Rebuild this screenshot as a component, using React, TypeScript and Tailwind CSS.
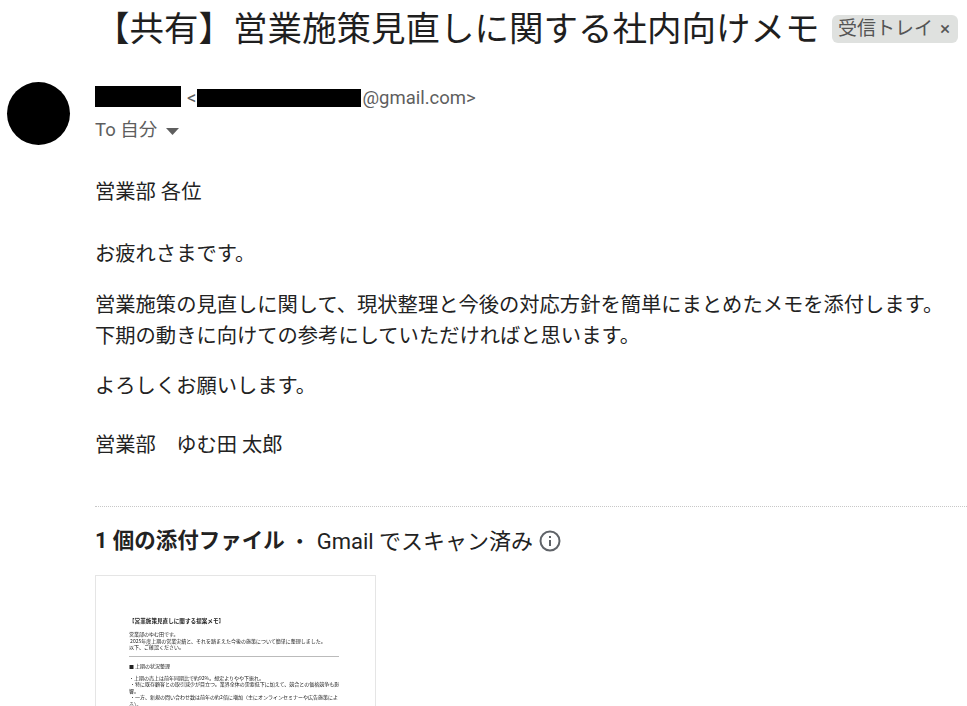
import React from "react";

const ff = { fontFamily: '"Roboto","Noto Sans CJK JP",sans-serif' };

function Thumb() {
  return (
    <div className="mt-[18px] w-[281px] h-[140px] border border-[#e5e5e5] overflow-hidden bg-white pl-[33px] pr-[36px] pt-[41px] text-[#222]" style={{ fontFamily: '"Noto Sans CJK JP",sans-serif' }}>
      <div className="blur-[0.4px]">
        <div className="text-[5.6px] leading-[9px] font-bold whitespace-nowrap">【営業施策見直しに関する提案メモ】</div>
        <div className="mt-[5px] text-[5px] leading-[6.5px] whitespace-nowrap">
          <div>営業部のゆむ田です。</div>
          <div>&nbsp;2025年度上期の営業実績と、それを踏まえた今後の施策について簡単に整理しました。</div>
          <div>以下、ご確認ください。</div>
        </div>
        <div className="mt-[5px] h-px bg-[#bbb]" />
        <div className="mt-[5px] text-[5px] leading-[8px] whitespace-nowrap">■ 上期の状況整理</div>
        <div className="mt-[5px] text-[5px] leading-[6.5px]">
          <div className="whitespace-nowrap">・上期の売上は前年同期比で約92%。想定よりやや下振れ。</div>
          <div className="whitespace-nowrap">&nbsp;・特に既存顧客との取引減少が目立つ。業界全体の需要低下に加えて、競合との価格競争も影</div>
          <div>響。</div>
          <div className="whitespace-nowrap">&nbsp;・一方、新規の問い合わせ数は前年の約2倍に増加（主にオンラインセミナーや広告施策によ</div>
          <div>る）。</div>
        </div>
      </div>
    </div>
  );
}

export default function App() {
  return (
    <div className="w-[967px] h-[706px] overflow-hidden bg-white" style={ff}>
      <div className="flex items-center h-[60px] pl-[95px]">
        <h1 className="text-[34.5px] leading-[40px] font-normal text-[#1f1f1f] whitespace-nowrap -mt-[2px]">【共有】営業施策見直しに関する社内向けメモ</h1>
        <div className="ml-[12.5px] h-[28px] w-[126px] -mt-[2px] rounded-[6px] bg-[#dfe1df] flex items-center pl-[6px] text-[#555] text-[19px] whitespace-nowrap">
          受信トレイ
          <span className="ml-[7px] text-[19px]">×</span>
        </div>
      </div>
      <div className="flex pl-[7px] mt-[22px]">
        <div className="w-[63px] h-[63px] rounded-full bg-black shrink-0" />
        <div className="ml-[25px] flex-1">
          <div className="flex items-end h-[25px]">
            <div className="w-[86px] h-[21px] bg-black" />
            <span className="ml-[6px] -mb-[2px] text-[18.5px] leading-[21px] text-[#5e5e5e]">&lt;</span>
            <div className="ml-[1px] w-[164px] h-[18px] bg-black" />
            <span className="ml-[1px] -mb-[2px] text-[18.5px] leading-[21px] text-[#5e5e5e]">@gmail.com&gt;</span>
          </div>
          <div className="flex items-center mt-[12px] h-[24px] text-[18.5px] text-[#5e5e5e]">
            To 自分
            <svg className="ml-[9px]" width="13" height="7" viewBox="0 0 13 7"><path d="M0 0h13L6.5 7z" fill="#5e5e5e" /></svg>
          </div>
        </div>
      </div>
      <div className="ml-[95px] mt-[32px] text-[20.3px] text-[#222] leading-[31px]">
        <p>営業部 各位</p>
        <p className="mt-[31px]">お疲れさまです。</p>
        <p className="mt-[20px] whitespace-nowrap">営業施策の見直しに関して、現状整理と今後の対応方針を簡単にまとめたメモを添付します。</p>
        <p className="whitespace-nowrap">下期の動きに向けての参考にしていただければと思います。</p>
        <p className="mt-[19px]">よろしくお願いします。</p>
        <p className="mt-[28px]">営業部　ゆむ田 太郎</p>
      </div>
      <div className="ml-[95px] mt-[45px] border-t border-dotted border-[#c8c8c8]" />
      <div className="ml-[95px] mt-[18px] flex items-center h-[32px] text-[22px] text-[#222] whitespace-nowrap">
        <span className="font-bold text-[21.5px]">1 個の添付ファイル</span>
        <span className="ml-[4px] mr-[6px]">・</span>
        <span>Gmail でスキャン済み</span>
        <svg className="ml-[6px]" width="22" height="22" viewBox="0 0 22 22" fill="none" stroke="#5f6368" strokeWidth="2">
          <circle cx="11" cy="11" r="9.5" />
          <path d="M11 10v6" />
          <path d="M11 6v2" />
        </svg>
      </div>
      <div className="ml-[95px]"><Thumb /></div>
    </div>
  );
}
